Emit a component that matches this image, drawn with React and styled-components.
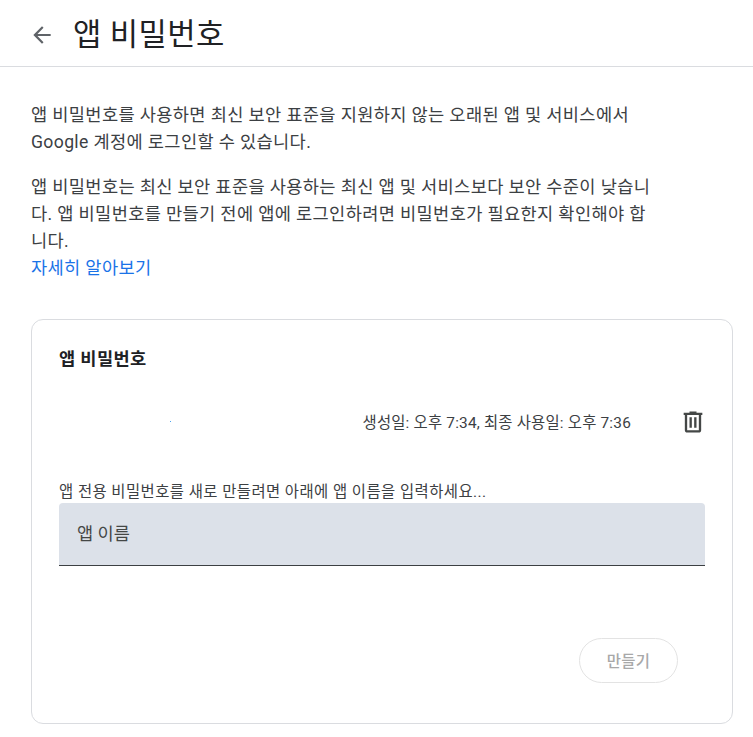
import React from 'react'
import styled, { createGlobalStyle } from 'styled-components'

const Global = createGlobalStyle`
  html, body { margin: 0; padding: 0; background: #fff; }
  body { font-family: Roboto, "Noto Sans CJK KR", sans-serif; color: #3c4043; }
  * { box-sizing: border-box; }
`

const Page = styled.div`
  width: 753px;
  height: 737px;
  overflow: hidden;
`

const Header = styled.header`
  display: flex;
  align-items: center;
  height: 67px;
  padding-left: 29px;
  border-bottom: 1px solid #dadce0;
`

const BackIcon = styled.svg`
  width: 26px;
  height: 26px;
  margin-top: 3px;
  margin-right: 18px;
  fill: #5f6368;
`

const Title = styled.h1`
  margin: 0 0 3px;
  font-size: 30.8px;
  font-weight: 400;
  letter-spacing: 0.4px;
  color: #202124;
`

const Content = styled.main`
  padding: 35px 20px 0 31px;
`

const Intro = styled.p`
  width: 625px;
  margin: 0 0 18px;
  font-size: 17.6px;
  line-height: 27px;
  letter-spacing: 0.36px;
  color: #3c4043;
`

const LearnMore = styled.a`
  display: block;
  color: #1a73e8;
  text-decoration: none;
`

const Card = styled.section`
  width: 702px;
  height: 405px;
  margin-top: 37px;
  padding: 27px 27px;
  border: 1px solid #dadce0;
  border-radius: 12px;
`

const CardTitle = styled.h2`
  margin: 0;
  font-size: 17.6px;
  line-height: 24px;
  font-weight: 700;
  letter-spacing: 0.4px;
  color: #202124;
`

const PasswordRow = styled.div`
  display: flex;
  align-items: center;
  height: 40px;
  margin-top: 30px;
`

const Dot = styled.span`
  width: 1px;
  height: 1px;
  margin-left: 111px;
  background: #4aa3f0;
`

const Dates = styled.span`
  margin-left: auto;
  font-size: 15.4px;
  letter-spacing: 0.2px;
  color: #3c4043;
`

const TrashIcon = styled.svg`
  width: 28px;
  height: 28px;
  margin-top: 1px;
  margin-left: 48px;
  margin-right: -2px;
  fill: #444746;
`

const FieldLabel = styled.label`
  display: block;
  margin-top: 41px;
  margin-bottom: 1px;
  font-size: 15.4px;
  line-height: 20px;
  letter-spacing: 0.45px;
  color: #3c4043;
`

const NameField = styled.div`
  display: flex;
  align-items: center;
  height: 63px;
  padding-left: 18px;
  padding-bottom: 3px;
  background: #dce1e9;
  border-bottom: 1px solid #3c4043;
  border-radius: 4px 4px 0 0;
  font-size: 17.6px;
  color: #444746;
`

const Actions = styled.div`
  display: flex;
  justify-content: flex-end;
  margin-top: 72px;
  padding-right: 27px;
`

const CreateButton = styled.button`
  width: 99px;
  height: 45px;
  padding-bottom: 3px;
  background: #fff;
  border: 1px solid #e3e3e3;
  border-radius: 23px;
  font-family: inherit;
  font-size: 15.4px;
  font-weight: 500;
  letter-spacing: 0.3px;
  color: #a8a8a8;
`

export default function App() {
  return (
    <Page>
      <Global />
      <Header>
        <BackIcon viewBox="0 0 24 24">
          <path d="M20 11H7.83l5.59-5.59L12 4l-8 8 8 8 1.41-1.41L7.83 13H20v-2z" />
        </BackIcon>
        <Title>앱 비밀번호</Title>
      </Header>
      <Content>
        <Intro>
          앱 비밀번호를 사용하면 최신 보안 표준을 지원하지 않는 오래된 앱 및 서비스에서 Google 계정에 로그인할 수 있습니다.
        </Intro>
        <Intro>
          앱 비밀번호는 최신 보안 표준을 사용하는 최신 앱 및 서비스보다 보안 수준이 낮습니다. 앱 비밀번호를 만들기 전에 앱에 로그인하려면 비밀번호가 필요한지 확인해야 합니다.
          <LearnMore href="#">자세히 알아보기</LearnMore>
        </Intro>
        <Card>
          <CardTitle>앱 비밀번호</CardTitle>
          <PasswordRow>
            <Dot />
            <Dates>생성일: 오후 7:34, 최종 사용일: 오후 7:36</Dates>
            <TrashIcon viewBox="0 0 24 24">
              <path d="M15 4V3H9v1H4v2h1v13c0 1.1.9 2 2 2h10c1.1 0 2-.9 2-2V6h1V4h-5zm2 15H7V6h10v13zM9 8h2v9H9V8zm4 0h2v9h-2V8z" />
            </TrashIcon>
          </PasswordRow>
          <FieldLabel>앱 전용 비밀번호를 새로 만들려면 아래에 앱 이름을 입력하세요...</FieldLabel>
          <NameField>앱 이름</NameField>
          <Actions>
            <CreateButton>만들기</CreateButton>
          </Actions>
        </Card>
      </Content>
    </Page>
  )
}
